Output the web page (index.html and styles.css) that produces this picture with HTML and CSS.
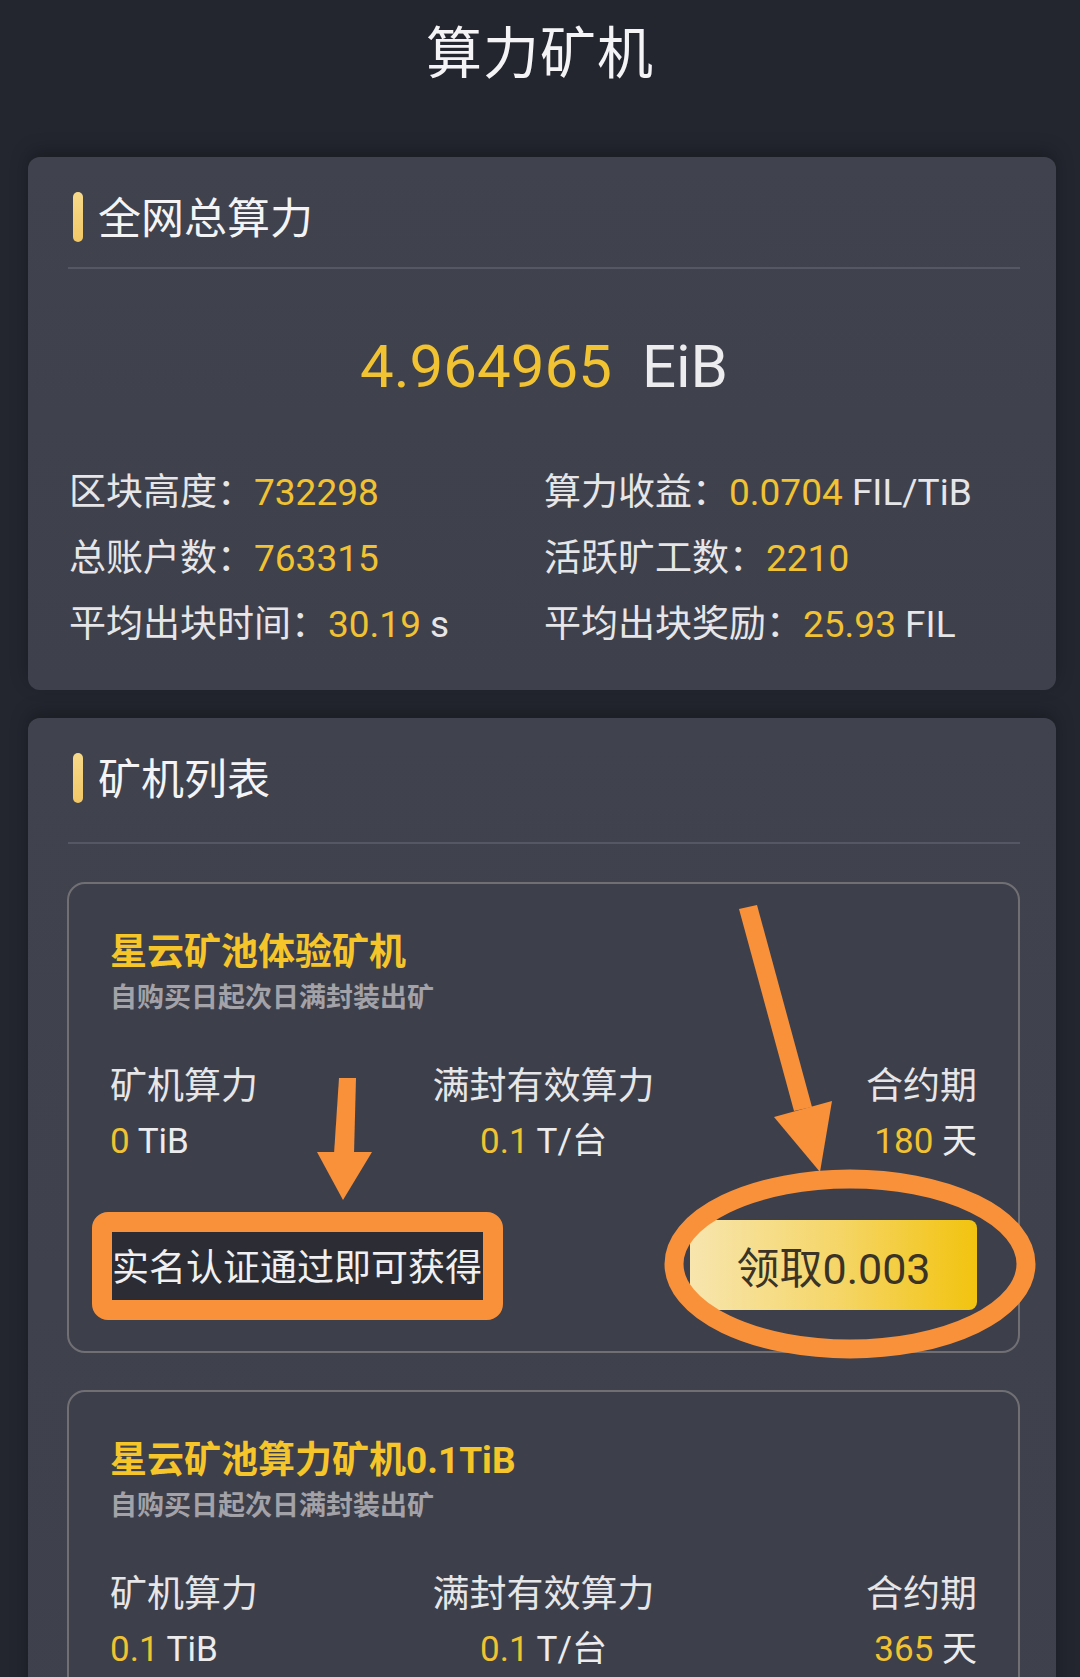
FILE: index.html
```html
<!DOCTYPE html>
<html lang="zh-CN">
<head>
<meta charset="utf-8">
<title>算力矿机</title>
<link rel="stylesheet" href="styles.css">
</head>
<body>
<div class="app">
  <header class="topbar"><h1>算力矿机</h1></header>

  <section class="card card-net">
    <div class="card-head"><span class="bar"></span><h2>全网总算力</h2></div>
    <div class="divider"></div>
    <div class="total"><span class="num">4.964965</span><span class="unit">EiB</span></div>
    <div class="stats">
      <div class="stat">区块高度：<span class="num">732298</span></div>
      <div class="stat">算力收益：<span class="num">0.0704</span> FIL/TiB</div>
      <div class="stat">总账户数：<span class="num">763315</span></div>
      <div class="stat">活跃旷工数：<span class="num">2210</span></div>
      <div class="stat">平均出块时间：<span class="num">30.19</span> s</div>
      <div class="stat">平均出块奖励：<span class="num">25.93</span> FIL</div>
    </div>
  </section>

  <section class="card card-list">
    <div class="card-head"><span class="bar"></span><h2>矿机列表</h2></div>
    <div class="divider divider-list"></div>
    <div class="miners">
      <article class="miner">
        <h3>星云矿池体验矿机</h3>
        <p class="sub">自购买日起次日满封装出矿</p>
        <div class="specs">
          <div class="spec spec-left"><div class="label">矿机算力</div><div class="val"><span class="num">0</span> TiB</div></div>
          <div class="spec spec-mid"><div class="label">满封有效算力</div><div class="val"><span class="num">0.1</span> T/台</div></div>
          <div class="spec spec-right"><div class="label">合约期</div><div class="val"><span class="num">180</span> 天</div></div>
        </div>
        <div class="actions">
          <span class="hint">实名认证通过即可获得</span>
          <button class="claim">领取0.003</button>
        </div>
        <svg class="annot" viewBox="0 0 953 471" width="953" height="471" aria-hidden="true">
          <rect x="35" y="340" width="391" height="88" rx="6" fill="none" stroke="#f8913a" stroke-width="20"/>
          <ellipse cx="783" cy="382" rx="176" ry="85" fill="none" stroke="#f8913a" stroke-width="19"/>
          <polygon points="272,196 289,196 287,272 267,272" fill="#f8913a"/>
          <polygon points="250,270 305,270 276,318" fill="#f8913a"/>
          <polygon points="672,27 690,23 745,225 727,229" fill="#f8913a"/>
          <polygon points="765,219 707,235 753,290" fill="#f8913a"/>
        </svg>
      </article>

      <article class="miner">
        <h3>星云矿池算力矿机0.1TiB</h3>
        <p class="sub">自购买日起次日满封装出矿</p>
        <div class="specs">
          <div class="spec spec-left"><div class="label">矿机算力</div><div class="val"><span class="num">0.1</span> TiB</div></div>
          <div class="spec spec-mid"><div class="label">满封有效算力</div><div class="val"><span class="num">0.1</span> T/台</div></div>
          <div class="spec spec-right"><div class="label">合约期</div><div class="val"><span class="num">365</span> 天</div></div>
        </div>
        <div class="actions actions-spacer"></div>
      </article>
    </div>
  </section>
</div>
</body>
</html>
```

FILE: styles.css
```css
html, body {
  margin: 0;
  padding: 0;
  background: #23262f;
}

body {
  font-family: Roboto, "Noto Sans CJK SC", sans-serif;
  color: #e8e8ea;
}

.app {
  width: 1080px;
  height: 100vh;
  overflow: hidden;
  background: #23262f;
}

.topbar {
  height: 108px;
  display: flex;
  align-items: center;
  justify-content: center;
}

.topbar h1 {
  margin: 0;
  font-size: 56px;
  font-weight: 400;
  line-height: 108px;
  color: #f4f4f6;
  letter-spacing: 1px;
}

.card {
  margin: 49px 24px 0 28px;
  background: linear-gradient(180deg, #40424e 0%, #3e404c 100%);
  border-radius: 12px;
  box-shadow: 0 -6px 18px rgba(0, 0, 0, 0.25);
  padding: 0 36px 32px 40px;
}

.card-list {
  margin-top: 28px;
  padding-bottom: 0;
}

.card-head {
  display: flex;
  align-items: center;
  padding-top: 35px;
  padding-left: 5px;
  height: 50px;
}

.bar {
  width: 10px;
  height: 50px;
  border-radius: 5px;
  background: linear-gradient(180deg, #f7d98a, #f2c766);
  flex: none;
}

.card-head h2 {
  margin: 4px 0 0 15px;
  font-size: 43px;
  font-weight: 400;
  line-height: 50px;
  color: #f4f4f6;
}

.divider {
  margin-top: 25px;
  height: 2px;
  background: #555765;
}

.divider-list {
  margin-top: 39px;
}

.total {
  margin-top: 67px;
  height: 62px;
  display: flex;
  justify-content: center;
  align-items: baseline;
  line-height: 62px;
  font-size: 60px;
}

.total .num {
  color: #f1c232;
}

.total .unit {
  margin-left: 30px;
  color: #ececee;
}

.stats {
  margin-top: 62px;
  padding-left: 1px;
  display: grid;
  grid-template-columns: 475px 1fr;
  grid-auto-rows: 66px;
}

.stat {
  font-size: 37px;
  line-height: 66px;
  white-space: nowrap;
  color: #e6e6e8;
}

.num {
  color: #f1c232;
}

.miners {
  margin-top: 38px;
  margin-left: -1px;
  display: flex;
  flex-direction: column;
  gap: 37px;
}

.miner {
  position: relative;
  border: 2px solid #707074;
  border-radius: 18px;
  padding: 0 41px 41px 41px;
  background: #3d3f4b;
}

.miner h3 {
  margin: 47px 0 0 0;
  font-size: 37px;
  font-weight: 700;
  line-height: 44px;
  color: #f6c52a;
}

.sub {
  margin: 5px 0 0 0;
  font-size: 27px;
  font-weight: 700;
  line-height: 36px;
  color: #a2a2a8;
}

.specs {
  margin-top: 48px;
  display: grid;
  grid-template-columns: 1fr 1fr 1fr;
}

.spec-left { text-align: left; }
.spec-mid { text-align: center; }
.spec-right { text-align: right; }

.label {
  font-size: 37px;
  line-height: 46px;
  color: #e6e6e8;
}

.val {
  margin-top: 10px;
  font-size: 35px;
  line-height: 44px;
  color: #ececee;
}

.actions {
  margin-top: 56px;
  height: 90px;
  display: flex;
  align-items: center;
  justify-content: space-between;
}

.hint {
  height: 78px;
  padding: 0 2px;
  display: flex;
  align-items: center;
  background: #2c2d34;
  font-size: 37px;
  color: #f0f0f2;
  white-space: nowrap;
}

.claim {
  width: 287px;
  height: 90px;
  border: none;
  border-radius: 8px;
  background: linear-gradient(90deg, #f7e5ae 0%, #f5d66a 50%, #f2c30f 100%);
  font-family: Roboto, "Noto Sans CJK SC", sans-serif;
  font-size: 43px;
  color: #3a3326;
  padding: 0;
}

.annot {
  position: absolute;
  top: -2px;
  left: -2px;
  overflow: visible;
  pointer-events: none;
}
```
